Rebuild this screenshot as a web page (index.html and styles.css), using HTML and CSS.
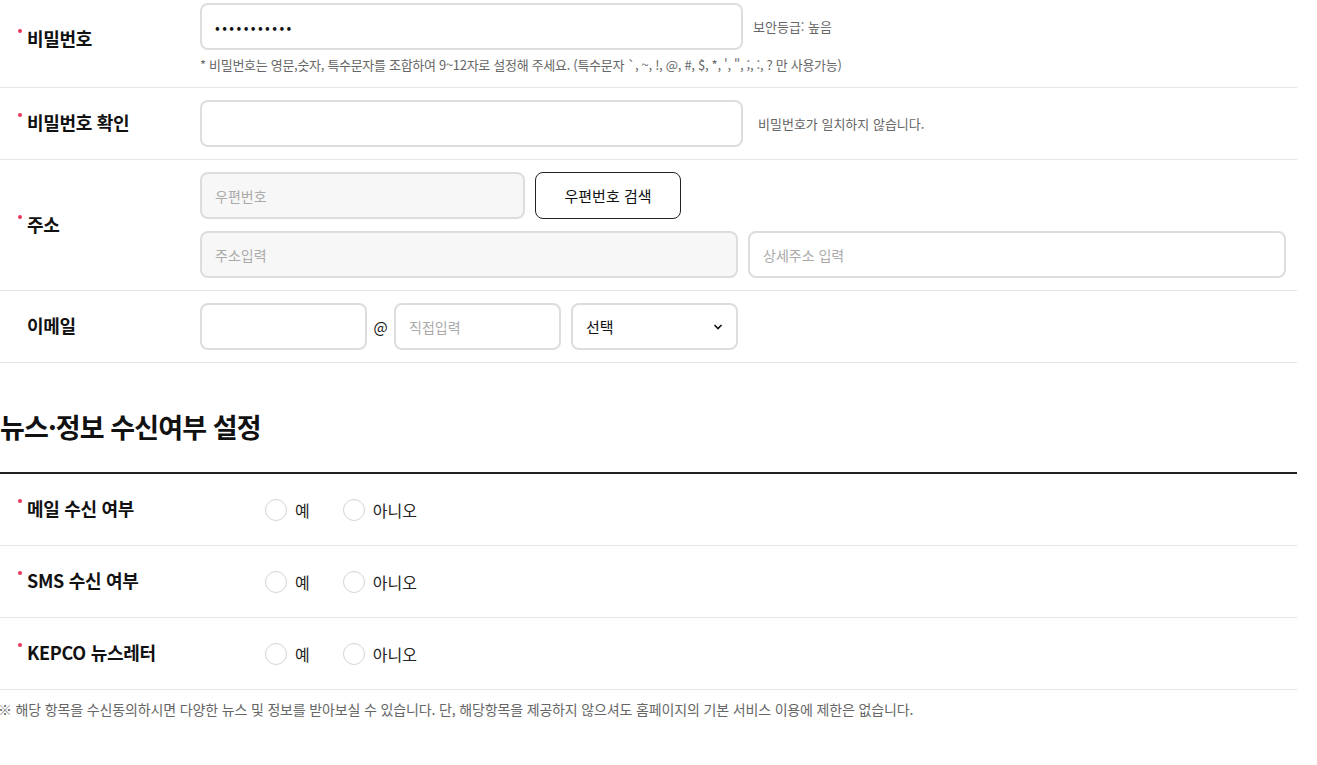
FILE: index.html
```html
<!DOCTYPE html>
<html lang="ko">
<head>
  <meta charset="UTF-8">
  <meta name="viewport" content="width=device-width, initial-scale=1.0">
  <title>회원정보 입력</title>
  <link rel="stylesheet" href="styles.css">
</head>
<body>
  <div class="page">
    <div class="form-table">
      <div class="row">
        <div class="th required">비밀번호</div>
        <div class="td">
          <div class="line">
            <input class="input w-lg" type="password" value="abcdefghijk">
            <span class="msg">보안등급: 높음</span>
          </div>
          <p class="help">* 비밀번호는 영문,숫자, 특수문자를 조합하여 9~12자로 설정해 주세요. (특수문자 `, ~, !, @, #, $, *, ', ", ;, :, ? 만 사용가능)</p>
        </div>
      </div>

      <div class="row">
        <div class="th required">비밀번호 확인</div>
        <div class="td">
          <div class="line">
            <input class="input w-lg" type="password">
            <span class="msg msg-wide">비밀번호가 일치하지 않습니다.</span>
          </div>
        </div>
      </div>

      <div class="row">
        <div class="th required">주소</div>
        <div class="td addr">
          <div class="line">
            <input class="input w-zip" type="text" placeholder="우편번호" disabled>
            <button class="btn-line" type="button">우편번호 검색</button>
          </div>
          <div class="line">
            <input class="input w-addr" type="text" placeholder="주소입력" disabled>
            <input class="input w-addr" type="text" placeholder="상세주소 입력">
          </div>
        </div>
      </div>

      <div class="row">
        <div class="th">이메일</div>
        <div class="td">
          <div class="line email">
            <input class="input w-mail" type="text">
            <span class="at">@</span>
            <input class="input w-mail" type="text" placeholder="직접입력">
            <div class="select w-mail">
              <span>선택</span>
              <svg width="10" height="6" viewBox="0 0 10 6"><path d="M1.5 1l3.5 3.5L8.5 1" fill="none" stroke="#111" stroke-width="1.6"/></svg>
            </div>
          </div>
        </div>
      </div>
    </div>

    <h2 class="sec-title">뉴스·정보 수신여부 설정</h2>

    <div class="form-table thick">
      <div class="row radio-row">
        <div class="th wide required">메일 수신 여부</div>
        <div class="td radios">
          <label class="radio"><input type="radio" name="mail"> 예</label>
          <label class="radio"><input type="radio" name="mail"> 아니오</label>
        </div>
      </div>
      <div class="row radio-row">
        <div class="th wide required">SMS 수신 여부</div>
        <div class="td radios">
          <label class="radio"><input type="radio" name="sms"> 예</label>
          <label class="radio"><input type="radio" name="sms"> 아니오</label>
        </div>
      </div>
      <div class="row radio-row">
        <div class="th wide required">KEPCO 뉴스레터</div>
        <div class="td radios">
          <label class="radio"><input type="radio" name="news"> 예</label>
          <label class="radio"><input type="radio" name="news"> 아니오</label>
        </div>
      </div>
    </div>

    <p class="note">※ 해당 항목을 수신동의하시면 다양한 뉴스 및 정보를 받아보실 수 있습니다. 단, 해당항목을 제공하지 않으셔도 홈페이지의 기본 서비스 이용에 제한은 없습니다.</p>
  </div>
</body>
</html>
```

FILE: styles.css
```css
body {
  font-family: "Noto Sans CJK KR", "Noto Sans", sans-serif;
  margin: 0;
  color: #111;
  background: #fff;
}

.page {
  width: 1297px;
  margin-top: -9px;
}

.form-table .row {
  display: flex;
  align-items: center;
  padding: 12px 0;
  border-bottom: 1px solid #e5e5e5;
}

.th {
  position: relative;
  width: 200px;
  flex-shrink: 0;
  padding-left: 27px;
  padding-bottom: 3px;
  box-sizing: border-box;
  font-size: 18px;
  font-weight: 700;
  letter-spacing: -0.3px;
  color: #111;
}

.th.wide {
  width: 265px;
}

.required::before {
  content: "";
  position: absolute;
  left: 18px;
  top: 4px;
  width: 4px;
  height: 4px;
  border-radius: 50%;
  background: #e8365a;
}

.td {
  display: flex;
  flex-direction: column;
}

.addr {
  gap: 12px;
}

.line {
  display: flex;
  align-items: center;
  gap: 10px;
}

.input {
  height: 47px;
  box-sizing: border-box;
  border: 2px solid #ddd;
  border-radius: 8px;
  padding: 0 13px;
  font-family: inherit;
  font-size: 14px;
  color: #111;
  background: #fff;
  outline: none;
}

.input::placeholder {
  color: #aaa;
}

.input:disabled {
  background: #f7f7f7;
}

.input[type="password"] {
  letter-spacing: 2.4px;
  font-size: 14px;
}

.w-lg {
  width: 543px;
}

.w-zip {
  width: 325px;
}

.w-addr {
  width: 538px;
}

.w-mail {
  width: 167px;
}

.msg {
  font-size: 13px;
  color: #666;
}

.msg-wide {
  margin-left: 5px;
}

.help {
  margin: 5px 0 0;
  font-size: 13px;
  line-height: 20px;
  letter-spacing: -0.3px;
  color: #666;
}

.btn-line {
  width: 146px;
  height: 47px;
  border: 1px solid #222;
  border-radius: 8px;
  background: #fff;
  font-family: inherit;
  font-size: 15px;
  color: #111;
}

.email {
  gap: 0;
}

.at {
  width: 27px;
  text-align: center;
  font-size: 15px;
  color: #111;
}

.select {
  display: flex;
  align-items: center;
  justify-content: space-between;
  height: 47px;
  box-sizing: border-box;
  margin-left: 10px;
  padding: 0 13px;
  border: 2px solid #ddd;
  border-radius: 8px;
  font-size: 15px;
}

.sec-title {
  margin: 46px 0 27px;
  font-size: 27px;
  font-weight: 700;
  letter-spacing: -0.9px;
  line-height: 36px;
  color: #111;
}

.thick {
  border-top: 2px solid #222;
}

.form-table .radio-row {
  height: 72px;
  padding: 0;
  box-sizing: border-box;
}

.radios {
  flex-direction: row;
  gap: 33px;
}

.radio {
  display: flex;
  align-items: center;
  gap: 8px;
  font-size: 16px;
  color: #222;
}

.radio input {
  appearance: none;
  width: 22px;
  height: 22px;
  margin: 0;
  border: 1px solid #d5d5d5;
  border-radius: 50%;
  background: #fff;
}

.note {
  margin: 9px 0 0 -2px;
  font-size: 14px;
  letter-spacing: -0.15px;
  color: #666;
}
```
